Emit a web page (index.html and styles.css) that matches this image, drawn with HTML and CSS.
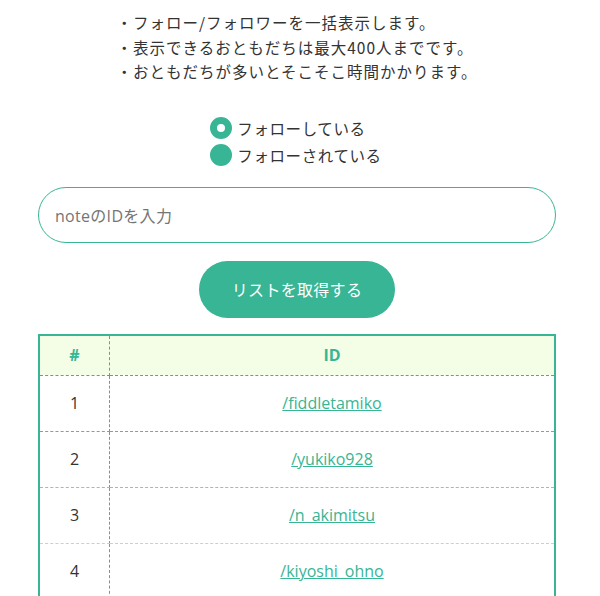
FILE: index.html
```html
<!DOCTYPE html>
<html lang="ja">
<head>
<meta charset="utf-8">
<link rel="stylesheet" href="styles.css">
</head>
<body>
<main class="page">
  <ul class="notes">
    <li>・フォロー/フォロワーを一括表示します。</li>
    <li>・表示できるおともだちは最大400人までです。</li>
    <li>・おともだちが多いとそこそこ時間かかります。</li>
  </ul>

  <div class="radios">
    <label class="radio"><span class="dot checked"></span>フォローしている</label>
    <label class="radio"><span class="dot"></span>フォローされている</label>
  </div>

  <div class="field">
    <span class="placeholder">noteのIDを入力</span>
  </div>

  <div class="actions">
    <button class="btn">リストを取得する</button>
  </div>

  <table class="list">
    <thead>
      <tr><th class="num">#</th><th>ID</th></tr>
    </thead>
    <tbody>
      <tr class="r1"><td class="num">1</td><td><a href="#">/fiddletamiko</a></td></tr>
      <tr class="r2"><td class="num">2</td><td><a href="#">/yukiko928</a></td></tr>
      <tr class="r3"><td class="num">3</td><td><a href="#">/n_akimitsu</a></td></tr>
      <tr class="r4"><td class="num">4</td><td><a href="#">/kiyoshi_ohno</a></td></tr>
    </tbody>
  </table>
</main>
</body>
</html>
```

FILE: styles.css
```css
html, body {
  margin: 0;
  padding: 0;
  background: #fff;
}
body {
  font-family: "Open Sans", "Noto Sans CJK JP", sans-serif;
  color: #333;
  font-size: 16px;
}
.page {
  width: 518px;
  margin-left: 38px;
  padding-top: 10px;
  display: flex;
  flex-direction: column;
  align-items: center;
}
.notes {
  list-style: none;
  margin: 0;
  padding: 0;
  font-size: 15.5px;
  letter-spacing: 1px;
  line-height: 24.5px;
  color: #333;
  font-family: "Noto Sans CJK JP", sans-serif;
}
.radios {
  margin-top: 33px;
  margin-left: -2px;
  display: flex;
  flex-direction: column;
  gap: 5px;
}
.radio {
  display: flex;
  align-items: center;
  gap: 5px;
  font-family: "Noto Sans CJK JP", sans-serif;
  font-size: 15.5px;
  letter-spacing: 0.6px;
  line-height: 22px;
  color: #333;
}
.dot {
  width: 22px;
  height: 22px;
  border-radius: 50%;
  background: #38b594;
  box-sizing: border-box;
}
.dot.checked {
  background: #fff;
  border: 7px solid #38b594;
}
.field {
  margin-top: 21px;
  width: 518px;
  height: 56px;
  box-sizing: border-box;
  border: 1px solid #38b594;
  border-radius: 28px;
  padding-left: 16px;
  display: flex;
  align-items: center;
}
.placeholder {
  color: #757575;
  font-size: 16px;
  letter-spacing: 0.3px;
}
.actions {
  margin-top: 18px;
}
.btn {
  width: 196px;
  height: 57px;
  border: 0;
  border-radius: 29px;
  background: #38b594;
  color: #fff;
  font-family: "Open Sans", "Noto Sans CJK JP", sans-serif;
  font-size: 16px;
  letter-spacing: 0.3px;
  padding: 0;
}
.list {
  margin-top: 16px;
  width: 518px;
  border-collapse: collapse;
  border: 2px solid #38b594;
}
.list th {
  background: #f4fde5;
  color: #38b594;
  font-weight: bold;
  font-size: 16px;
  height: 39px;
  padding: 0;
  border-bottom: 1px dashed #38b594;
}
.list td {
  height: 55px;
  padding: 0;
  text-align: center;
  font-size: 16px;
  color: #333;
}
.list .num {
  width: 69px;
  border-right: 1px dashed #38b594;
  text-align: center;
}
.r1 td { border-bottom: 1px dashed #4dbb9e; }
.r2 td { border-bottom: 1px dashed #7ccdb7; }
.r3 td { border-bottom: 1px dashed #a9e0d1; }
.list a {
  color: #38b594;
  text-decoration: underline;
}
```
